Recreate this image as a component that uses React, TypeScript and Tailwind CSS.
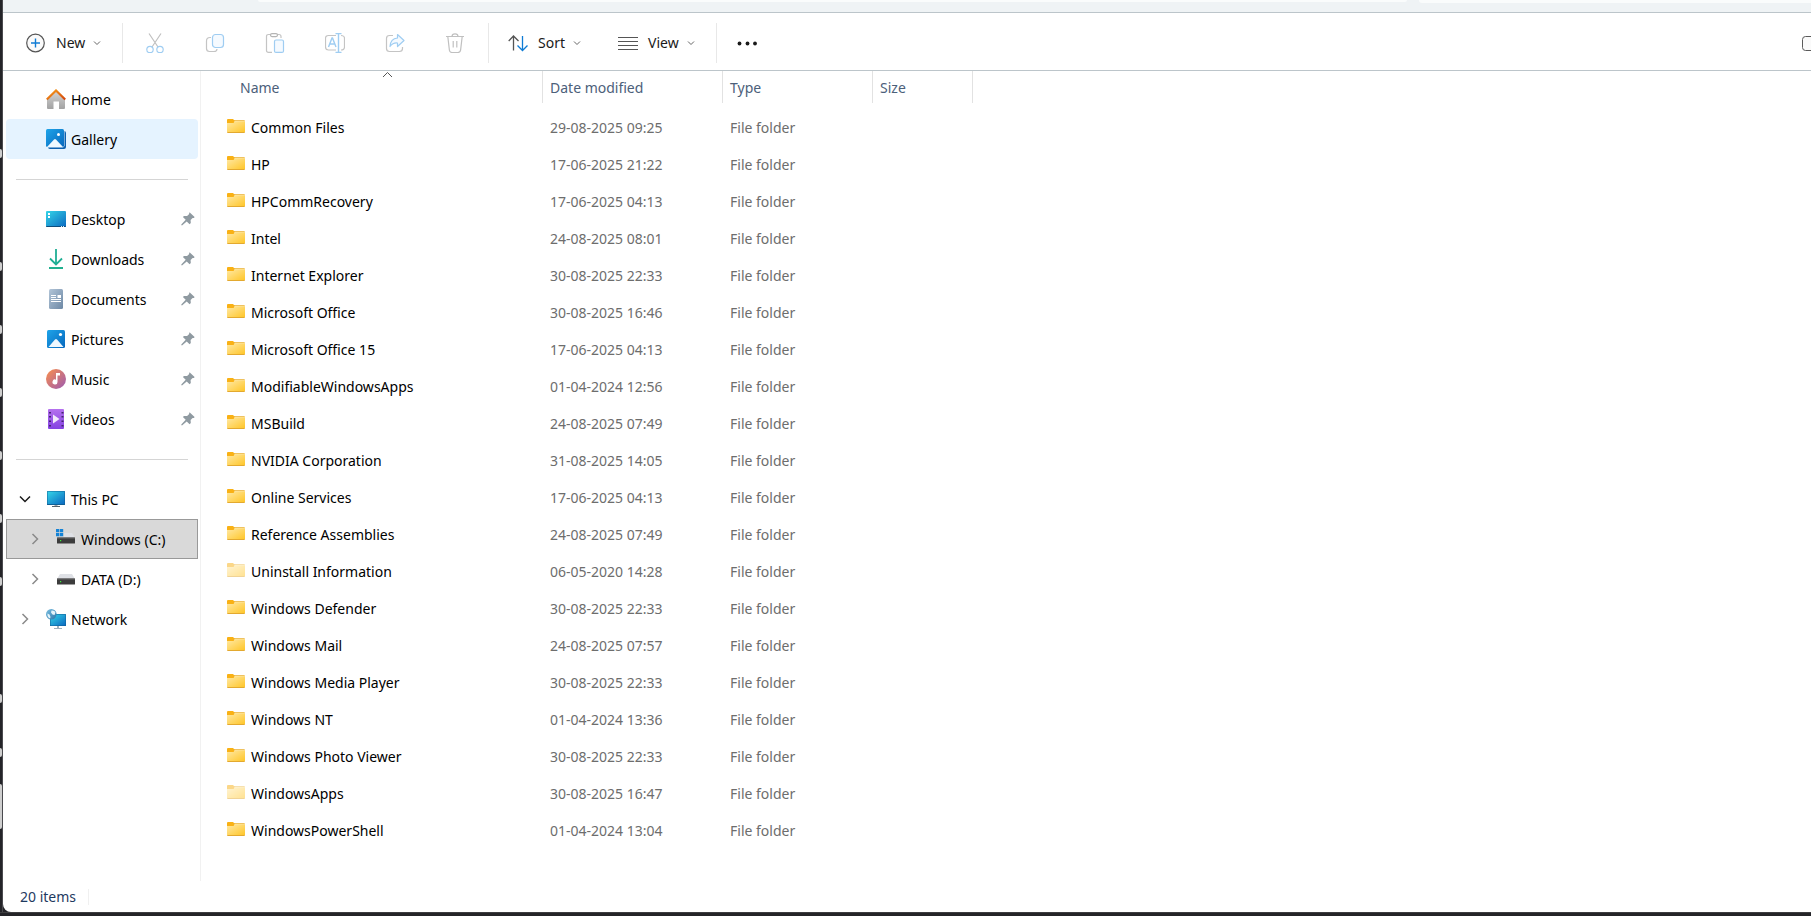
import { useState, type ReactNode } from 'react';

const folders = [
  { name: 'Common Files', modified: '29-08-2025 09:25' },
  { name: 'HP', modified: '17-06-2025 21:22' },
  { name: 'HPCommRecovery', modified: '17-06-2025 04:13' },
  { name: 'Intel', modified: '24-08-2025 08:01' },
  { name: 'Internet Explorer', modified: '30-08-2025 22:33' },
  { name: 'Microsoft Office', modified: '30-08-2025 16:46' },
  { name: 'Microsoft Office 15', modified: '17-06-2025 04:13' },
  { name: 'ModifiableWindowsApps', modified: '01-04-2024 12:56' },
  { name: 'MSBuild', modified: '24-08-2025 07:49' },
  { name: 'NVIDIA Corporation', modified: '31-08-2025 14:05' },
  { name: 'Online Services', modified: '17-06-2025 04:13' },
  { name: 'Reference Assemblies', modified: '24-08-2025 07:49' },
  { name: 'Uninstall Information', modified: '06-05-2020 14:28', hidden: true },
  { name: 'Windows Defender', modified: '30-08-2025 22:33' },
  { name: 'Windows Mail', modified: '24-08-2025 07:57' },
  { name: 'Windows Media Player', modified: '30-08-2025 22:33' },
  { name: 'Windows NT', modified: '01-04-2024 13:36' },
  { name: 'Windows Photo Viewer', modified: '30-08-2025 22:33' },
  { name: 'WindowsApps', modified: '30-08-2025 16:47', hidden: true },
  { name: 'WindowsPowerShell', modified: '01-04-2024 13:04' },
];

const quickAccess = [
  { label: 'Desktop', icon: <DesktopIcon /> },
  { label: 'Downloads', icon: <DownloadsIcon /> },
  { label: 'Documents', icon: <DocumentsIcon /> },
  { label: 'Pictures', icon: <PicturesIcon /> },
  { label: 'Music', icon: <MusicIcon /> },
  { label: 'Videos', icon: <VideosIcon /> },
];

export default function App() {
  return (
    <div className="flex h-screen flex-col overflow-hidden bg-[#242428] font-['Noto_Sans','Open_Sans',sans-serif] text-sm text-black">
      <div className="flex min-h-0 flex-1">
        <Backdrop />
        <div className="flex min-w-0 flex-1 flex-col overflow-hidden rounded-bl-lg bg-white">
          <AddressStrip />
          <Toolbar />
          <div className="flex min-h-0 flex-1">
            <Sidebar />
            <FileList />
          </div>
          <footer className="flex h-[31px] shrink-0 items-center pl-[17px] text-[#1f3a5f]">
            <span>{folders.length} items</span>
            <span className="ml-3 h-4 w-px bg-[#f0f0f0]" />
          </footer>
        </div>
      </div>
      <div className="h-1 shrink-0 border-t border-[#3e3e40]" />
    </div>
  );
}

// Sliver of the window behind, visible along the left edge
function Backdrop() {
  return (
    <div className="flex w-[3px] shrink-0 flex-col border-r border-[#4a4a4e]" aria-hidden="true">
      <i className="mt-[149px] h-[9px] rounded-r-sm bg-[#cfcfcf]" />
      <i className="mt-[104px] h-[9px] rounded-r-sm bg-[#cfcfcf]" />
      <i className="mt-[54px] h-[9px] rounded-r-sm bg-[#cfcfcf]" />
      <i className="mt-[54px] h-[9px] rounded-r-sm bg-[#cfcfcf]" />
      <i className="mt-[54px] h-[9px] rounded-r-sm bg-[#cfcfcf]" />
      <i className="mt-[54px] h-[9px] rounded-r-sm bg-[#cfcfcf]" />
      <i className="mt-[54px] h-[9px] rounded-r-sm bg-[#cfcfcf]" />
      <i className="mt-[108px] h-[9px] rounded-r-sm bg-[#cfcfcf]" />
      <i className="mt-[45px] h-[9px] rounded-r-sm bg-[#cfcfcf]" />
      <i className="mt-[27px] h-[45px] rounded-r-sm bg-[#cfcfcf]" />
    </div>
  );
}

function AddressStrip() {
  return (
    <div className="flex h-[13px] shrink-0 items-start border-b border-[#bcc5ca] bg-[#eff3f5] pl-[255px]">
      <div className="h-[2px] flex-[1148] rounded-b bg-[#fafcfc]" />
      <div className="ml-3 h-[3px] flex-[392] rounded-bl bg-[#fafcfc]" />
    </div>
  );
}

function Toolbar() {
  return (
    <div className="flex h-[58px] shrink-0 items-center border-b border-[#bcc5ca] pt-[2px] pl-[23px] text-[#1a1a1a]">
      <MenuButton label="New" icon={<NewIcon />} className="w-[75px]" />
      <Divider className="mr-[2px] ml-[21px]" />
      <ToolButton label="Cut" icon={<CutIcon />} />
      <ToolButton label="Copy" icon={<CopyIcon />} />
      <ToolButton label="Paste" icon={<PasteIcon />} />
      <ToolButton label="Rename" icon={<RenameIcon />} />
      <ToolButton label="Share" icon={<ShareIcon />} />
      <ToolButton label="Delete" icon={<DeleteIcon />} />
      <Divider className="mr-[19px] ml-[3px]" />
      <MenuButton label="Sort" icon={<SortIcon />} className="w-[73px]" />
      <MenuButton label="View" icon={<ViewIcon />} className="ml-[37px] w-[77px]" />
      <Divider className="mr-[20px] ml-[21px]" />
      <button type="button" aria-label="See more">
        <svg width="20" height="20" viewBox="0 0 20 20" fill="#1a1a1a">
          <circle cx="2.500" cy="10.500" r="1.900" />
          <circle cx="10.500" cy="10.500" r="1.900" />
          <circle cx="18" cy="10.500" r="1.900" />
        </svg>
      </button>
      <button type="button" aria-label="Details" className="ml-auto w-[9px] overflow-hidden">
        <svg className="max-w-none" width="20" height="20" viewBox="0 0 20 20">
          <rect x="0.5" y="3.5" width="19" height="14" rx="3" fill="#fafafa" stroke="#5a5a5a" />
        </svg>
      </button>
    </div>
  );
}

function Divider({ className }: { className: string }) {
  return <div className={`h-10 w-px shrink-0 bg-[#e8e8e8] ${className}`} />;
}

function MenuButton({
  label,
  icon,
  className,
}: {
  label: string;
  icon: ReactNode;
  className: string;
}) {
  return (
    <button type="button" className={`flex h-8 items-center ${className}`}>
      <span className="mr-[10px] shrink-0">{icon}</span>
      <span className="pt-px">{label}</span>
      <svg className="ml-auto shrink-0" width="8" height="6" viewBox="0 0 8 6" fill="none">
        <path d="M1 1.500 4 4.500 7 1.500" stroke="#666" />
      </svg>
    </button>
  );
}

function ToolButton({ label, icon }: { label: string; icon: ReactNode }) {
  return (
    <button type="button" aria-label={label} disabled className="flex h-8 w-15 items-center justify-center">
      {icon}
    </button>
  );
}

function Sidebar() {
  return (
    <nav className="flex w-[198px] shrink-0 flex-col border-r border-[#f1f1f1] pt-2 pr-[2px] pl-[3px]">
      <NavItem label="Home" icon={<HomeIcon />} />
      <NavItem label="Gallery" icon={<GalleryIcon />} className="rounded-sm bg-[#e5f3ff]" />
      <NavSeparator />
      {quickAccess.map(({ label, icon }) => (
        <NavItem key={label} label={label} icon={icon} pinned />
      ))}
      <NavSeparator />
      <NavItem label="This PC" icon={<PcIcon />} expand="open" />
      <NavItem
        label="Windows (C:)"
        icon={<DriveIcon system />}
        expand="closed"
        nested
        className="bg-[#d9d9d9] outline -outline-offset-1 outline-[#999]"
      />
      <NavItem label="DATA (D:)" icon={<DriveIcon />} expand="closed" nested />
      <NavItem label="Network" icon={<NetworkIcon />} expand="closed" />
    </nav>
  );
}

function NavSeparator() {
  return (
    <div className="flex h-10 shrink-0 items-center pr-[10px] pl-[10px]">
      <hr className="flex-1 border-[#d5d5d5]" />
    </div>
  );
}

function NavItem({
  label,
  icon,
  expand,
  nested = false,
  pinned = false,
  className = '',
}: {
  label: string;
  icon: ReactNode;
  expand?: 'open' | 'closed';
  nested?: boolean;
  pinned?: boolean;
  className?: string;
}) {
  return (
    <div className={`flex h-10 shrink-0 items-center ${nested ? 'pl-[10px]' : ''} ${className}`}>
      <div className="flex w-10 shrink-0 justify-start pl-3">
        {expand && (
          <button type="button" aria-label={expand === 'open' ? `Collapse ${label}` : `Expand ${label}`}>
            {expand === 'open' ? (
              <svg width="14" height="12" viewBox="0 0 14 12" fill="none">
                <path d="M2 3.500 7 8.500 12 3.500" stroke="#1a1a1a" strokeWidth="1.500" />
              </svg>
            ) : (
              <svg width="14" height="12" viewBox="0 0 14 12" fill="none">
                <path d="M4.500 1 9.500 6 4.500 11" stroke="#8a8a8a" strokeWidth="1.500" />
              </svg>
            )}
          </button>
        )}
      </div>
      <a href="#" className="flex flex-1 items-center gap-[5px]">
        {icon}
        <span className="pt-[2px]">{label}</span>
      </a>
      {pinned && <PinIcon />}
    </div>
  );
}

function FileList() {
  const [ascending, setAscending] = useState(true);
  const rows = ascending ? folders : [...folders].reverse();

  return (
    <main className="min-w-0 flex-1">
      <table className="w-[772px] table-fixed border-collapse text-left">
        <colgroup>
          <col className="w-[342px]" />
          <col className="w-[180px]" />
          <col className="w-[150px]" />
          <col className="w-[100px]" />
        </colgroup>
        <thead>
          <tr className="h-[38px] align-top text-[#4c607a]">
            <th className="p-0 font-normal">
              <button
                type="button"
                onClick={() => setAscending(!ascending)}
                className="relative flex h-8 w-full items-center border-r border-[#e2e2e2] pt-[2px] pl-[39px]"
              >
                Name
                <svg className="absolute top-0 left-[181px]" width="11" height="7" viewBox="0 0 11 7" fill="none">
                  <path d={ascending ? 'M1 6 5.5 1.5 10 6' : 'M1 1.5 5.5 6 10 1.5'} stroke="#555" />
                </svg>
              </button>
            </th>
            <HeaderCell label="Date modified" />
            <HeaderCell label="Type" />
            <HeaderCell label="Size" />
          </tr>
        </thead>
        <tbody>
          {rows.map(({ name, modified, hidden }) => (
            <tr key={name} className="h-[37px] text-[#6d6d6d]">
              <td className="p-0 pl-[26px]">
                <a href="#" className="flex items-center gap-[6px] text-black">
                  <FolderIcon faded={hidden} />
                  {name}
                </a>
              </td>
              <td className="p-0 pl-[7px]">{modified}</td>
              <td className="p-0 pl-[7px]">File folder</td>
              <td className="p-0" />
            </tr>
          ))}
        </tbody>
      </table>
    </main>
  );
}

function HeaderCell({ label }: { label: string }) {
  return (
    <th className="p-0 font-normal">
      <button type="button" className="flex h-8 w-full items-center border-r border-[#e2e2e2] pt-[2px] pl-[7px]">
        {label}
      </button>
    </th>
  );
}

function FolderIcon({ faded }: { faded?: boolean }) {
  return (
    <svg className={`mb-1 shrink-0 ${faded ? 'opacity-50' : ''}`} width="18" height="14" viewBox="0 0 18 14">
      <defs>
        <linearGradient id="folder" x1="0" y1="0" x2="1" y2="1">
          <stop offset="0" stopColor="#ffe9a6" />
          <stop offset="1" stopColor="#ffc629" />
        </linearGradient>
      </defs>
      <path fill="#f9b115" d="M0 1Q0 0 1 0h5l1.500 1.500V4H0z" />
      <path fill="#e9ae2c" d="M7 1.200h10q1 0 1 1H7z" />
      <path fill="url(#folder)" d="M0 4h6.500L8 2.200h10V13H0z" />
      <path fill="#e3a92f" d="M0 13h18q0 1-1 1H1q-1 0-1-1z" />
    </svg>
  );
}

function NewIcon() {
  return (
    <svg width="20" height="20" viewBox="0 0 20 20" fill="none">
      <circle cx="9.500" cy="10" r="8.800" stroke="#555" strokeWidth="1.200" fill="#fafafa" />
      <path d="M9.500 5.500v9M5 10h9" stroke="#0f7bd4" strokeWidth="1.400" />
    </svg>
  );
}

function CutIcon() {
  return (
    <svg width="20" height="20" viewBox="0 0 20 20" fill="none" strokeWidth="1.200">
      <path d="M4 .5 13 14M16 .5 7 14" stroke="#c0c0c0" />
      <circle cx="5" cy="16.500" r="3.200" stroke="#9fcdf2" />
      <circle cx="15" cy="16.500" r="3.200" stroke="#9fcdf2" />
    </svg>
  );
}

function CopyIcon() {
  return (
    <svg width="20" height="20" viewBox="0 0 20 20" fill="none" strokeWidth="1.200">
      <path d="M6 4.500H5Q1.500 4.500 1.500 8v7.500q0 3 3 3H9q3 0 3-2.500" stroke="#c4c4c4" />
      <rect x="7.500" y="1.500" width="11" height="13" rx="3" stroke="#9fcdf2" fill="#f5faff" />
    </svg>
  );
}

function PasteIcon() {
  return (
    <svg width="20" height="20" viewBox="0 0 20 20" fill="none" strokeWidth="1.200">
      <path d="M7 19.400H3.500q-2 0-2-2V3.500q0-2 2-2h2M12.500 1.500h1.500q2 0 2 2V5" stroke="#c4c4c4" />
      <rect x="5.500" y=".6" width="7" height="3" rx="1.500" stroke="#b4b4b4" />
      <rect x="9.500" y="7" width="9" height="12.400" rx="1.500" stroke="#9fcdf2" fill="#f5faff" />
    </svg>
  );
}

function RenameIcon() {
  return (
    <svg width="20" height="20" viewBox="0 0 20 20" fill="none" strokeWidth="1.200">
      <path d="M11 2.500H3.500q-3 0-3 3v8.500q0 3 3 3H11M16 2.500q3.500 0 3.500 3V14q0 3-3.500 3" stroke="#c4c4c4" />
      <path d="m3.500 14 3.500-9h.5l3.500 9M4.800 11h5" stroke="#9fcdf2" strokeWidth="1.400" />
      <path d="M10.500.6h6M10.500 19.400h6M13.500.6v18.800" stroke="#9fcdf2" strokeWidth="1.400" />
    </svg>
  );
}

function ShareIcon() {
  return (
    <svg width="20" height="20" viewBox="0 0 20 20" fill="none" strokeWidth="1.200">
      <path d="M8 2.500H4.500q-3 0-3 3v10q0 3 3 3h10q3 0 3-3V14" stroke="#c4c4c4" />
      <path
        d="M12.500 1.500 19 7.500l-6.500 6V10Q8 9.500 5 13.500 5.500 5.500 12.500 5z"
        stroke="#9fcdf2"
        fill="#f5faff"
        strokeLinejoin="round"
      />
    </svg>
  );
}

function DeleteIcon() {
  return (
    <svg width="20" height="20" viewBox="0 0 20 20" fill="none" stroke="#c0c0c0" strokeWidth="1.200">
      <path d="M1 3.500h18M7 3.500Q7 .8 10 .8t3 2.700" />
      <path d="m2.800 3.500 1.600 13.700q.3 2.300 2.600 2.300h6q2.300 0 2.600-2.300L17.200 3.500M8.200 8v6.500M11.800 8v6.500" />
    </svg>
  );
}

function SortIcon() {
  return (
    <svg width="20" height="20" viewBox="0 0 20 20" fill="none" strokeWidth="1.300">
      <path d="M5.500 17.500V3M.7 8 5.500 3l5 5" stroke="#555" />
      <path d="M14.500 3v14.500M9.500 12.500l5 5 5-5" stroke="#0f7bd4" />
    </svg>
  );
}

function ViewIcon() {
  return (
    <svg width="20" height="20" viewBox="0 0 20 20" stroke="#555">
      <path d="M0 4.500h20M0 8.500h20M0 12.500h20M0 16.500h20" />
    </svg>
  );
}

function PinIcon() {
  return (
    <svg className="mr-[3px] shrink-0" width="14" height="14" viewBox="0 0 14 14" fill="#8f9aa1">
      <path d="M8.800.4 13.600 5l-.6 1-1.400-.1-2 2.200.2 3-1.200 1.200-2.900-2.900L1 13.500l-.8-.4.3-.8 4.200-4.500L1.900 5.100 3 4l3.100.1L8.200 2l-.1-1.200z" />
    </svg>
  );
}

function HomeIcon() {
  return (
    <svg className="shrink-0" width="20" height="20" viewBox="0 0 20 20">
      <defs>
        <linearGradient id="wall" x1="0" y1="0" x2="0" y2="1">
          <stop offset="0" stopColor="#d8d8d8" />
          <stop offset="1" stopColor="#a2a2a2" />
        </linearGradient>
        <linearGradient id="roof" x1="0" y1="0" x2="1" y2="1">
          <stop offset="0" stopColor="#f9a01b" />
          <stop offset="1" stopColor="#d2440c" />
        </linearGradient>
      </defs>
      <path fill="url(#wall)" d="M1 9.500 10 1l9 8.500V19q0 1-1 1h-5v-7.500H7.500V20H2q-1 0-1-1z" />
      <path d="m.8 10.500 9.200-9 9.200 9" fill="none" stroke="url(#roof)" strokeWidth="2.200" />
    </svg>
  );
}

function GalleryIcon() {
  return (
    <svg className="shrink-0" width="20" height="20" viewBox="0 0 20 20">
      <defs>
        <linearGradient id="sky" x1="0" y1="0" x2="1" y2="1">
          <stop offset="0" stopColor="#1ea4e9" />
          <stop offset="1" stopColor="#0767bd" />
        </linearGradient>
      </defs>
      <path fill="#0b5fae" d="M18 2q2 0 2 2v14q0 2-2 2H4q-2 0-2-2h16z" />
      <rect width="18.500" height="18.500" rx="2" fill="#e5f3ff" />
      <rect width="18" height="18" rx="1.500" fill="url(#sky)" />
      <circle cx="12.500" cy="5.500" r="1.500" fill="#fff" />
      <path fill="#eef8ff" d="m1 18 7-7.500q1-1 2 0l7 7.500z" />
    </svg>
  );
}

function DesktopIcon() {
  return (
    <svg className="shrink-0" width="20" height="16" viewBox="0 0 20 16">
      <defs>
        <linearGradient id="screen" x1="0" y1="0" x2="1" y2="1">
          <stop offset="0" stopColor="#35d5e8" />
          <stop offset="1" stopColor="#0b69c0" />
        </linearGradient>
      </defs>
      <rect width="20" height="16" rx="1" fill="url(#screen)" />
      <path fill="#0e4d7c" d="M0 15h20q0 1-1 1H1q-1 0-1-1z" />
      <path fill="#fff" d="M2 2h2v2H2zM2 5h2v2H2z" />
      <path fill="#d6ecfa" d="M15 15h1v1h-1zM17 15h1v1h-1z" />
    </svg>
  );
}

function DownloadsIcon() {
  return (
    <svg className="shrink-0" width="20" height="20" viewBox="0 0 20 20" fill="none">
      <path d="M10 0v15M4 9.500l6 6 6-6" stroke="#1fae94" strokeWidth="1.800" />
      <path d="M3 19h14" stroke="#21b08f" strokeWidth="2" />
    </svg>
  );
}

function DocumentsIcon() {
  return (
    <svg className="shrink-0" width="20" height="20" viewBox="0 0 20 20">
      <defs>
        <linearGradient id="page" x1="0" y1="0" x2="1" y2="1">
          <stop offset="0" stopColor="#b2c5d8" />
          <stop offset="1" stopColor="#6d88a5" />
        </linearGradient>
      </defs>
      <rect x="3" width="14" height="20" rx="1.500" fill="url(#page)" />
      <path fill="#fff" d="M5 6h5v1H5zM5 8h5v1H5zM11.500 6H15v3h-3.500zM5 10h10v1H5zM5 12h10v1H5z" />
    </svg>
  );
}

function PicturesIcon() {
  return (
    <svg className="shrink-0" width="20" height="20" viewBox="0 0 20 20">
      <rect x="1" y="1" width="18" height="18" rx="1.500" fill="url(#sky)" />
      <circle cx="14.500" cy="5.500" r="1.600" fill="#fff" />
      <path fill="#eef8ff" d="m2.500 18 6.500-7.500q1-1 2 0l6.500 7.500z" />
    </svg>
  );
}

function MusicIcon() {
  return (
    <svg className="shrink-0" width="20" height="20" viewBox="0 0 20 20">
      <defs>
        <linearGradient id="disc" x1="0" y1="0" x2="1" y2="1">
          <stop offset="0.100" stopColor="#f28a55" />
          <stop offset="0.900" stopColor="#a55fa8" />
        </linearGradient>
      </defs>
      <circle cx="10" cy="10" r="10" fill="url(#disc)" />
      <path fill="#fff" d="M10 4h4v2.500h-2.500V13a2.500 2.500 0 1 1-1.500-2.300z" />
    </svg>
  );
}

function VideosIcon() {
  return (
    <svg className="shrink-0" width="20" height="20" viewBox="0 0 20 20">
      <defs>
        <linearGradient id="film" x1="0" y1="0" x2="0" y2="1">
          <stop offset="0" stopColor="#b571ee" />
          <stop offset="1" stopColor="#8442e2" />
        </linearGradient>
      </defs>
      <rect x="2" width="16" height="20" rx="1" fill="url(#film)" />
      <path
        fill="#43256f"
        d="M3 3h2v1.500H3zM3 7h2v1.500H3zM3 11.500h2V13H3zM3 16h2v1.500H3zM15.500 3h2v1.500h-2zM15.500 7h2v1.500h-2zM15.500 11.500h2V13h-2zM15.500 16h2v1.500h-2z"
      />
      <path fill="#f3eafc" d="m7 5.500 6.500 4.500L7 14.500z" />
    </svg>
  );
}

function PcIcon() {
  return (
    <svg className="shrink-0" width="20" height="18" viewBox="0 0 20 18">
      <rect x="1" y="1" width="18" height="14" rx=".5" fill="#0e5f96" />
      <rect x="1.500" y="1.500" width="17" height="12.500" fill="url(#screen)" />
      <path fill="#9aa3ab" d="M8.500 15h3v1.500h-3z" />
      <path fill="#56616b" d="M6 16h8v1H6z" />
    </svg>
  );
}

function DriveIcon({ system = false }: { system?: boolean }) {
  return (
    <svg className="shrink-0" width="20" height="20" viewBox="0 0 20 20">
      <g transform={system ? 'translate(0 -1)' : undefined}>
        <path fill="#dfe1e6" d="M4 5h12l3 5H1z" />
        <rect x="1" y="9.500" width="18" height="6" rx=".5" fill="#3c3c3c" />
        <path fill="#6a6a6a" d="M1 9.500h18v1H1z" />
        <path fill="#3bf03b" d="M4 12h1.200v1.200H4z" />
      </g>
      {system && (
        <>
          <path fill="#d9d9d9" d="M0 0h8v8H0z" />
          <path fill="#1583d6" d="M0 0h3.300v3.300H0zM3.900 0h3.300v3.300H3.900zM0 3.900h3.300v3.300H0zM3.900 3.900h3.300v3.300H3.900z" />
        </>
      )}
    </svg>
  );
}

function NetworkIcon() {
  return (
    <svg className="shrink-0" width="20" height="20" viewBox="0 0 20 20">
      <defs>
        <linearGradient id="globe" x1="0" y1="0" x2="1" y2="1">
          <stop offset="0" stopColor="#7cc0e2" />
          <stop offset="1" stopColor="#2a75a8" />
        </linearGradient>
      </defs>
      <rect x="4" y="5" width="16" height="12" rx=".5" fill="#0e5f96" />
      <rect x="4.500" y="5.500" width="15" height="11" fill="url(#screen)" />
      <path fill="#9fb0bd" d="M11 17h2v2h3v1H8v-1h3z" />
      <circle cx="5.300" cy="5.300" r="5.300" fill="url(#globe)" />
      <path fill="#e4f3fa" d="M5.500 1.500Q8.500 1 9.500 3.500L8.500 6 6.500 5.500 5 3.500zM1.500 4.500l2 1 1 2.500-.5 1.500Q1 8 1.500 4.500z" />
    </svg>
  );
}
